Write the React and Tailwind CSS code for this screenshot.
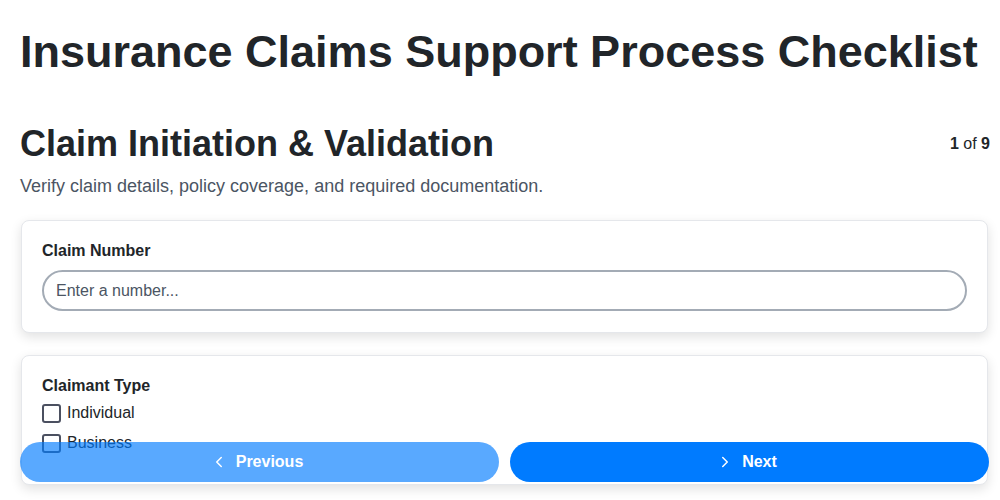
import React, { useState } from "react";
import { ChevronLeft, ChevronRight } from "lucide-react";

const font = { fontFamily: '"Liberation Sans", Arial, sans-serif' };

const Card = ({ children }) => (
  <div className="ml-px mr-[2px] rounded-lg border border-[#e5e7eb] bg-white px-5 pt-5 pb-[21px] shadow-[0_4px_12px_rgba(0,0,0,0.12)]">
    {children}
  </div>
);

const Checkbox = ({ label, checked, onChange }) => (
  <label className="flex h-[30px] items-center gap-[6px] text-[16px] text-[#212529]">
    <span
      onClick={onChange}
      className={
        "h-[19px] w-[19px] rounded-[3px] border-2 border-[#4b5060] " +
        (checked ? "bg-[#007bff]" : "bg-white")
      }
    />
    {label}
  </label>
);

export default function App() {
  const [claimNumber, setClaimNumber] = useState("");
  const [types, setTypes] = useState({ Individual: false, Business: false });

  return (
    <div style={font} className="min-h-screen bg-white pl-5 pr-[10px] pb-24 text-[#212529]">
      <h1 className="pt-[25px] text-[45px] font-bold leading-[1.2]">
        Insurance Claims Support Process Checklist
      </h1>

      <div className="mt-[43px] flex items-center justify-between">
        <h2 className="text-[36px] font-bold leading-[1.2]">
          Claim Initiation &amp; Validation
        </h2>
        <div className="text-[16px]">
          <span className="font-bold">1</span> of <span className="font-bold">9</span>
        </div>
      </div>
      <p className="mt-[8px] text-[18px] leading-[1.5] text-[#4b5563]">
        Verify claim details, policy coverage, and required documentation.
      </p>

      <div className="mt-[20px] flex flex-col gap-[22px]">
        <Card>
          <div className="text-[16px] font-bold leading-5">Claim Number</div>
          <input
            type="text"
            value={claimNumber}
            onChange={(e) => setClaimNumber(e.target.value)}
            placeholder="Enter a number..."
            className="mt-[9px] h-[41px] w-full rounded-full border-2 border-[#a3abb5] px-3 text-[16px] text-[#212529] outline-none placeholder:text-[#4b5563]"
          />
        </Card>

        <Card>
          <div className="text-[16px] font-bold leading-5">Claimant Type</div>
          <div className="mt-[2px] pb-[5px]">
            {Object.keys(types).map((t) => (
              <Checkbox
                key={t}
                label={t}
                checked={types[t]}
                onChange={() => setTypes({ ...types, [t]: !types[t] })}
              />
            ))}
          </div>
        </Card>
      </div>

      <div className="fixed bottom-[18px] left-5 right-[11px] flex gap-[11px]">
        <button className="flex h-10 flex-1 items-center justify-center gap-2 rounded-full bg-[#007bff] pr-[6px] text-[16px] font-bold text-white opacity-65">
          <ChevronLeft size={18} strokeWidth={2} />
          Previous
        </button>
        <button className="flex h-10 flex-1 items-center justify-center gap-2 rounded-full bg-[#007bff] pr-[6px] text-[16px] font-bold text-white">
          <ChevronRight size={18} strokeWidth={2} />
          Next
        </button>
      </div>
    </div>
  );
}
